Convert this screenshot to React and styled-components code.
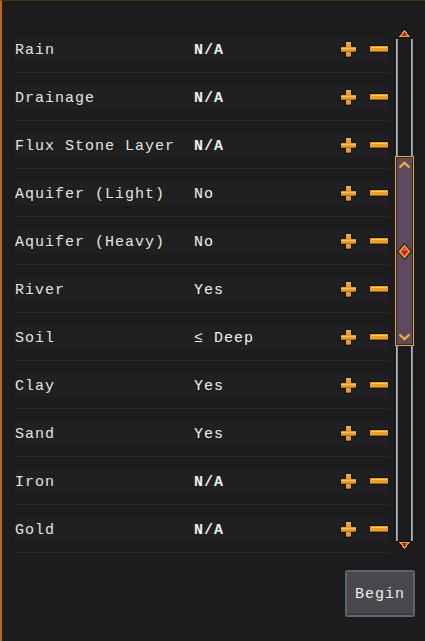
import React from "react";
import styled, { createGlobalStyle } from "styled-components";

const Global = createGlobalStyle`
  html, body { margin: 0; padding: 0; background: #1c1c1d; }
  body { width: 425px; height: 641px; overflow: hidden; }
`;

const Frame = styled.div`
  box-sizing: border-box;
  width: 425px;
  height: 641px;
  background: #1c1c1d;
  border-left: 2px solid #b5681f;
  border-top: 1px solid #4a3118;
  display: flex;
  flex-direction: column;
  font-family: "Liberation Mono", "DejaVu Sans Mono", monospace;
  color: #e9e9e9;
`;

const Body = styled.div`
  display: flex;
  align-items: flex-start;
`;

const List = styled.div`
  width: 374px;
  margin-left: 13px;
  padding-top: 24px;
  display: flex;
  flex-direction: column;
`;

const Row = styled.div`
  box-sizing: border-box;
  height: 48px;
  display: grid;
  grid-template-columns: 179px 1fr auto;
  align-items: center;
  border-bottom: 1px solid #2a2a2b;
  background: linear-gradient(
    to bottom,
    transparent 13px,
    #202021 13px,
    #202021 37px,
    transparent 37px
  );
`;

const Label = styled.span`
  font-size: 15px;
  letter-spacing: 1px;
  white-space: pre;
  color: #e4e4e4;
  padding-top: 3px;
`;

const Value = styled.span`
  font-size: 15px;
  letter-spacing: 1px;
  white-space: pre;
  color: #f0f0f0;
  padding-top: 3px;
  font-weight: ${(p) => (p.$bold ? 700 : 400)};
`;

const Controls = styled.div`
  display: flex;
  align-items: center;
  gap: 12px;
  padding-top: 1px;
`;

const IconButton = styled.button`
  border: none;
  background: none;
  padding: 0;
  margin: 0;
  display: flex;
  cursor: pointer;
`;

const ScrollCol = styled.div`
  width: 19px;
  margin-left: 6px;
  padding-top: 27px;
  display: flex;
  flex-direction: column;
  align-items: center;
`;

const Track = styled.div`
  position: relative;
  width: 19px;
  height: 502px;
  box-sizing: border-box;
  &::before,
  &::after {
    content: "";
    position: absolute;
    top: 0;
    bottom: 0;
    width: 2px;
    background: linear-gradient(to right, #c4c7cf, #7a7c84);
  }
  &::before { left: 1px; }
  &::after { right: 1px; }
`;

const Thumb = styled.div`
  position: absolute;
  left: 0;
  width: 19px;
  box-sizing: border-box;
  background: #5e4a5e;
  border: 1px solid #dca634;
  box-shadow: inset 0 0 0 1px #3b2a2a;
  display: flex;
  flex-direction: column;
  align-items: center;
  justify-content: space-between;
  padding: 4px 0 4px;
  z-index: 1;
`;

const Footer = styled.div`
  display: flex;
  justify-content: flex-end;
  padding: 17px 10px 0 0;
`;

const BeginButton = styled.button`
  width: 70px;
  height: 47px;
  box-sizing: border-box;
  background: #49494d;
  border: 2px solid #5b6773;
  border-radius: 3px;
  box-shadow: inset 0 -2px 0 #3c3c40;
  color: #ececec;
  font-family: "Liberation Mono", "DejaVu Sans Mono", monospace;
  font-size: 15px;
  letter-spacing: 1px;
  padding: 2px 0 0;
  cursor: pointer;
`;

const Plus = () => (
  <svg width="17" height="17" viewBox="0 0 17 17" shapeRendering="crispEdges">
    <rect x="5" y="0" width="7" height="17" fill="#1a1108" />
    <rect x="0" y="5" width="17" height="7" fill="#1a1108" />
    <rect x="6" y="1" width="5" height="15" fill="#e3a12c" />
    <rect x="1" y="6" width="15" height="5" fill="#e3a12c" />
    <rect x="7" y="1" width="3" height="1" fill="#f7cf6a" />
    <rect x="1" y="7" width="15" height="1" fill="#f5c860" />
    <rect x="6" y="15" width="5" height="1" fill="#a8661a" />
    <rect x="1" y="10" width="15" height="1" fill="#b06c1c" />
  </svg>
);

const Minus = () => (
  <svg width="20" height="8" viewBox="0 0 20 8" shapeRendering="crispEdges">
    <rect x="0" y="0" width="20" height="8" fill="#1a1108" />
    <rect x="1" y="1" width="18" height="6" fill="#e3a12c" />
    <rect x="2" y="2" width="16" height="1" fill="#f5c860" />
    <rect x="1" y="6" width="18" height="1" fill="#a8661a" />
  </svg>
);

const ArrowUp = () => (
  <svg width="15" height="11" viewBox="0 0 15 11" shapeRendering="crispEdges">
    <polygon points="7.5,0 15,10 0,10" fill="#1a1108" />
    <polygon points="7.5,1.5 13,9 2,9" fill="#e0a030" />
    <polygon points="7.5,4 10.5,8 4.5,8" fill="#b5202a" />
  </svg>
);

const ArrowDown = () => (
  <svg width="15" height="11" viewBox="0 0 15 11" shapeRendering="crispEdges">
    <polygon points="0,0 15,0 7.5,10" fill="#1a1108" />
    <polygon points="2,1 13,1 7.5,8.5" fill="#e0a030" />
    <polygon points="4.5,2 10.5,2 7.5,6" fill="#b5202a" />
  </svg>
);

const ChevronUp = () => (
  <svg width="13" height="8" viewBox="0 0 13 8">
    <polyline points="1.5,6.5 6.5,1.8 11.5,6.5" fill="none" stroke="#e8b03a" strokeWidth="2.4" />
  </svg>
);

const ChevronDown = () => (
  <svg width="13" height="8" viewBox="0 0 13 8">
    <polyline points="1.5,1.5 6.5,6.2 11.5,1.5" fill="none" stroke="#e8b03a" strokeWidth="2.4" />
  </svg>
);

const Gem = () => (
  <svg width="15" height="17" viewBox="0 0 15 17">
    <polygon points="7.5,0 15,8.5 7.5,17 0,8.5" fill="#2a1a10" />
    <polygon points="7.5,1.5 13.5,8.5 7.5,15.5 1.5,8.5" fill="#e2a632" />
    <polygon points="7.5,4 11,8.5 7.5,13 4,8.5" fill="#c41e35" />
    <polygon points="7.5,5 9,7.5 7.5,8 6,7.5" fill="#f06a7a" />
  </svg>
);

const rows = [
  ["Rain", "N/A"],
  ["Drainage", "N/A"],
  ["Flux Stone Layer", "N/A"],
  ["Aquifer (Light)", "No"],
  ["Aquifer (Heavy)", "No"],
  ["River", "Yes"],
  ["Soil", "≤ Deep"],
  ["Clay", "Yes"],
  ["Sand", "Yes"],
  ["Iron", "N/A"],
  ["Gold", "N/A"],
];

export default function App() {
  return (
    <>
      <Global />
      <Frame>
        <Body>
          <List>
            {rows.map(([label, value]) => (
              <Row key={label}>
                <Label>{label}</Label>
                <Value $bold={value === "N/A"}>{value}</Value>
                <Controls>
                  <IconButton aria-label="increase">
                    <Plus />
                  </IconButton>
                  <IconButton aria-label="decrease">
                    <Minus />
                  </IconButton>
                </Controls>
              </Row>
            ))}
          </List>
          <ScrollCol>
            <ArrowUp />
            <Track>
              <Thumb style={{ top: 117, height: 190 }}>
                <ChevronUp />
                <Gem />
                <ChevronDown />
              </Thumb>
            </Track>
            <ArrowDown />
          </ScrollCol>
        </Body>
        <Footer>
          <BeginButton>Begin</BeginButton>
        </Footer>
      </Frame>
    </>
  );
}
